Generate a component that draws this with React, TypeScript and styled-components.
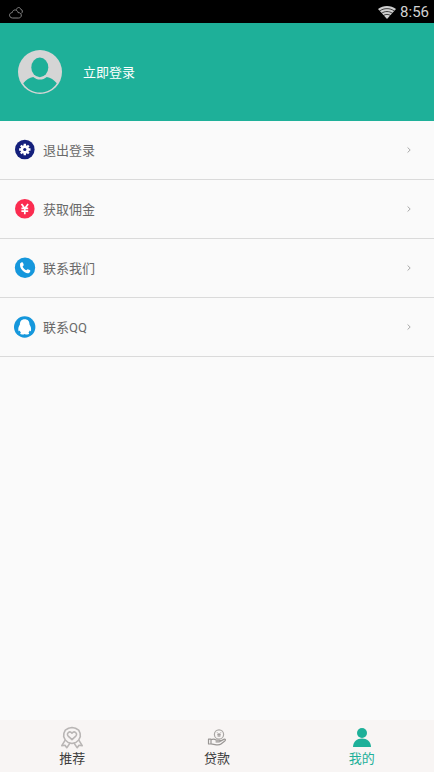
import React from "react";
import styled, { createGlobalStyle } from "styled-components";

const GlobalStyle = createGlobalStyle`
  *, *::before, *::after { box-sizing: border-box; }
  body {
    margin: 0;
    background: #fafafa;
    font-family: Roboto, "Noto Sans CJK SC", sans-serif;
    font-size: 13px;
  }
`;

const Screen = styled.div`
  display: flex;
  flex-direction: column;
  min-height: 100vh;
`;

const StatusBar = styled.div`
  display: flex;
  align-items: center;
  justify-content: space-between;
  height: 23px;
  padding: 0 5px 0 8px;
  background: #000;
  color: #d2d2d2;
`;

const StatusGroup = styled.div`
  display: flex;
  align-items: center;
  gap: 4px;
`;

const Clock = styled.time`
  font-size: 15px;
  line-height: 22px;
  padding-top: 1px;
`;

const Profile = styled.header`
  display: flex;
  align-items: center;
  height: 98px;
  padding: 0 18px;
  background: #1eb099;
`;

const LoginButton = styled.button`
  display: flex;
  align-items: center;
  gap: 20px;
  padding: 0;
  border: 0;
  background: none;
  color: #fff;
  font: inherit;
  cursor: pointer;
`;

const LoginLabel = styled.span`
  padding-bottom: 2px;
`;

const Menu = styled.main`
  flex: 1;
`;

const MenuItem = styled.button`
  display: flex;
  align-items: center;
  width: 100%;
  height: 59px;
  padding: 0 22px 0 14px;
  border: 0;
  border-bottom: 1px solid #dadada;
  background: none;
  color: #696969;
  font: inherit;
  text-align: left;
  cursor: pointer;
`;

const MenuLabel = styled.span`
  flex: 1;
  margin-left: 7px;
  padding-bottom: 2px;
`;

const TabBar = styled.nav`
  display: flex;
  height: 52px;
  background: #f8f5f4;
`;

const Tab = styled.a<{ $active?: boolean }>`
  display: flex;
  flex: 1;
  flex-direction: column;
  align-items: center;
  padding-top: 6px;
  color: ${(p) => (p.$active ? "#1eb099" : "#3c3c3c")};
  line-height: 18px;
  text-decoration: none;
`;

const CloudIcon = () => (
  <svg width="16" height="14" viewBox="0 0 16 14" fill="none" stroke="#858585" strokeWidth="1" aria-hidden="true">
    <path d="M4.5 13C.6 12.8.6 7.8 4.2 7.6C4.8 4 9.4 4 10 7.6C14.2 7.4 14.4 12.8 10.7 13Z" />
    <path d="M8.4 4.6C9 2 12.2 1.8 12.6 4.2C14.8 4.4 14.8 7.4 13.4 8.4" />
  </svg>
);

const WifiIcon = () => (
  <svg width="18" height="14" viewBox="0 0 18 14" aria-label="Wi-Fi">
    <path d="M0 4.1C5 .1 13 .1 18 4.1L9 14Z" fill="#cfcfcf" />
    <g fill="none" stroke="#000" strokeWidth=".7">
      <path d="M1.4 6.1C6 2.8 12 2.8 16.6 6.1" />
      <path d="M3.3 8.4C7 5.9 11 5.9 14.7 8.4" />
      <path d="M5.2 10.6C7.8 9 10.2 9 12.8 10.6" />
    </g>
  </svg>
);

const Avatar = () => (
  <svg width="45" height="45" viewBox="0 0 45 45" aria-hidden="true">
    <circle cx="22" cy="22" r="22" fill="#d5d5d5" />
    <ellipse cx="21.8" cy="17.4" rx="8.5" ry="9.8" fill="#1eb099" />
    <path d="M5.2 33.2C8 29.8 11.6 27.6 15.2 27C19.2 30.4 24.8 30.4 28.8 27C32.4 27.6 36 29.8 38.8 33.2C31 45.6 13 45.6 5.2 33.2Z" fill="#1eb099" />
  </svg>
);

const GearIcon = () => (
  <svg width="22" height="22" viewBox="0 0 22 22" aria-hidden="true">
    <circle cx="10.8" cy="10.5" r="9.8" fill="#14207c" />
    <g stroke="#fff" strokeWidth="2.4">
      <path d="M10.8 4.8V16.2M5.1 10.5H16.5M6.8 6.5L14.8 14.5M6.8 14.5L14.8 6.5" />
    </g>
    <circle cx="10.8" cy="10.5" r="4.3" fill="#fff" />
    <circle cx="10.8" cy="10.5" r="1.6" fill="#14207c" />
  </svg>
);

const YuanIcon = () => (
  <svg width="22" height="22" viewBox="0 0 22 22" aria-hidden="true">
    <circle cx="10.8" cy="10.7" r="9.8" fill="#fb2c50" />
    <path d="M7.5 6L10.8 10.5L14.1 6M10.8 10V16.2M7.4 10.4H14.2M7.4 13.1H14.2" fill="none" stroke="#fff" strokeWidth="1.7" />
  </svg>
);

const PhoneIcon = () => (
  <svg width="22" height="22" viewBox="0 0 22 22" aria-hidden="true">
    <circle cx="11" cy="10.8" r="10.2" fill="#1597dc" />
    <path d="M6.2 6.2L7.7 5.3C8.4 5 8.9 5.4 9.1 6.1L9.7 7.7C9.9 8.4 9 9 8.6 9.5C9.3 11.2 10.7 12.6 12.4 13.3C13 12.8 13.5 12.1 14.3 12.4L15.7 13.1C16.4 13.5 16.6 14 16.1 14.7L15.1 15.9C11.5 17.5 4.7 11.8 6.2 6.2Z" fill="#fff" />
  </svg>
);

const QQIcon = () => (
  <svg width="22" height="22" viewBox="0 0 22 22" aria-hidden="true">
    <circle cx="10.7" cy="11" r="10.7" fill="#1597dc" />
    <path d="M10.7 3.2C7.4 3.2 5.8 5.4 5.9 8.6C4.7 10.4 3.8 12.7 4.5 15.1C5 15.6 5.4 14.9 5.8 14.5C6 15.4 6.4 16 7 16.5C5.6 17.1 6.1 18.6 8.2 18.6C9.4 18.6 10.2 18.4 10.7 18C11.2 18.4 12 18.6 13.2 18.6C15.3 18.6 15.8 17.1 14.4 16.5C15 16 15.4 15.4 15.6 14.5C16 14.9 16.4 15.6 16.9 15.1C17.6 12.7 16.7 10.4 15.5 8.6C15.6 5.4 14 3.2 10.7 3.2Z" fill="#fff" />
  </svg>
);

const ChevronIcon = () => (
  <svg width="6" height="8" viewBox="0 0 6 8" fill="none" stroke="#a8a8a8" aria-hidden="true">
    <path d="M1.6 1.5L4.2 4L1.6 6.5" />
  </svg>
);

const MedalIcon = () => (
  <svg width="24" height="24" viewBox="0 0 24 24" fill="none" stroke="#b9b6b5" strokeWidth="1.6" strokeLinejoin="round" aria-hidden="true">
    <path d="M5.2 14.2L1.8 19.7L5 19.2L6.8 21.7L10 17.1M18.8 14.2L22.2 19.7L19 19.2L17.2 21.7L14 17.1" />
    <path d="M12 1.5L15.5 2.2L18.7 4.1L20.1 7.3L20.3 10.7L18.7 14L15.8 16.5L12 17.5L8.2 16.5L5.3 14L3.7 10.7L3.9 7.3L5.3 4.1L8.5 2.2Z" />
    <path d="M12 13.7L8.2 10.1C5.8 7.3 9.7 4.3 12 7.2C14.3 4.3 18.2 7.3 15.8 10.1Z" />
  </svg>
);

const LoanIcon = () => (
  <svg width="24" height="24" viewBox="0 0 24 24" fill="none" stroke="#999694" strokeWidth="1.2" strokeLinejoin="round" aria-hidden="true">
    <circle cx="14" cy="8.4" r="4.6" stroke="#aaa7a5" />
    <path d="M12 6.3L14 8.3L16 6.3M14 8V11M12.2 8.5H15.8M12.2 9.9H15.8" strokeWidth=".8" />
    <path d="M3.5 13.2H6V18H3.5ZM6 13.8C8.5 12.6 10 13.3 11.3 14.2H14.4C15.6 14.3 15.5 15.8 14.2 15.8H10.6M15.5 15.1L18.8 13.4C20.5 12.8 21 14.1 19.8 15L16 18C14.6 19.1 12 19 10 18.6L6 17.8" />
  </svg>
);

const PersonIcon = () => (
  <svg width="24" height="24" viewBox="0 0 24 24" fill="#1eb099" aria-hidden="true">
    <circle cx="12" cy="7" r="5" />
    <path d="M3 21C3 15.8 7 12.5 12 12.5C17 12.5 21 15.8 21 21Z" />
  </svg>
);

const menuItems = [
  { label: "退出登录", icon: <GearIcon /> },
  { label: "获取佣金", icon: <YuanIcon /> },
  { label: "联系我们", icon: <PhoneIcon /> },
  { label: "联系QQ", icon: <QQIcon /> },
];

const tabs = [
  { label: "推荐", href: "#recommend", icon: <MedalIcon /> },
  { label: "贷款", href: "#loans", icon: <LoanIcon /> },
  { label: "我的", href: "#mine", icon: <PersonIcon />, active: true },
];

export default function App() {
  return (
    <Screen lang="zh-CN">
      <GlobalStyle />
      <StatusBar>
        <CloudIcon />
        <StatusGroup>
          <WifiIcon />
          <Clock>8:56</Clock>
        </StatusGroup>
      </StatusBar>
      <Profile>
        <LoginButton type="button">
          <Avatar />
          <LoginLabel>立即登录</LoginLabel>
        </LoginButton>
      </Profile>
      <Menu>
        {menuItems.map((item) => (
          <MenuItem key={item.label} type="button">
            {item.icon}
            <MenuLabel>{item.label}</MenuLabel>
            <ChevronIcon />
          </MenuItem>
        ))}
      </Menu>
      <TabBar>
        {tabs.map((tab) => (
          <Tab key={tab.label} href={tab.href} $active={tab.active} aria-current={tab.active ? "page" : undefined}>
            {tab.icon}
            <span>{tab.label}</span>
          </Tab>
        ))}
      </TabBar>
    </Screen>
  );
}
